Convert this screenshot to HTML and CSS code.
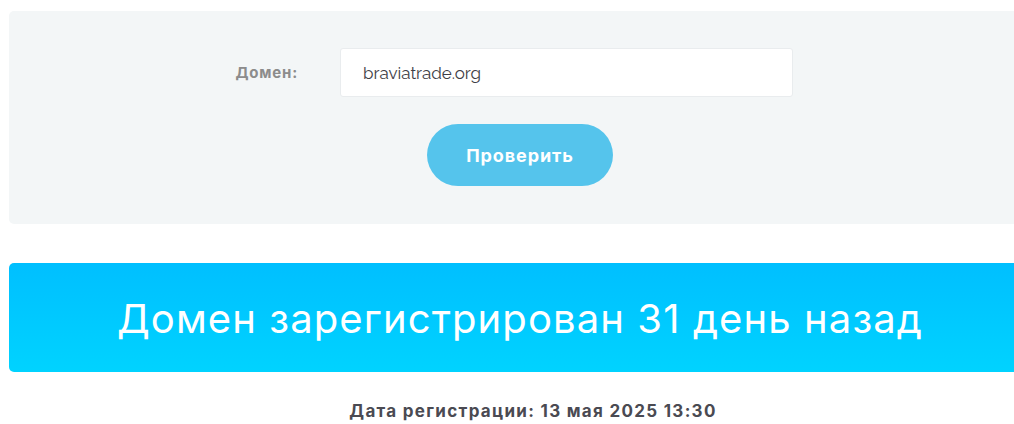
FILE: index.html
```html
<!DOCTYPE html>
<html lang="ru">
<head>
<meta charset="utf-8">
<title>Проверка домена</title>
<link rel="stylesheet" href="styles.css">
</head>
<body>
<div class="page">
  <form class="check-card">
    <div class="form-row">
      <label class="field-label" for="domain">Домен:</label>
      <input class="field-input" id="domain" type="text" value="braviatrade.org">
    </div>
    <div class="actions">
      <button class="check-btn" type="button">Проверить</button>
    </div>
  </form>
  <div class="result-banner">
    <h1 class="result-title">Домен зарегистрирован 31 день назад</h1>
  </div>
  <p class="reg-date">Дата регистрации: 13 мая 2025 13:30</p>
</div>
</body>
</html>
```

FILE: styles.css
```css
html, body {
  margin: 0;
  padding: 0;
  overflow: hidden;
  background: #ffffff;
}
body {
  font-family: Inter, "Noto Sans", "DejaVu Sans", sans-serif;
}
.page {
  width: 1022px;
  padding: 11px 0 0 9px;
}
.check-card {
  margin: 0;
  background: #f3f6f7;
  border-radius: 5px;
  padding: 37px 0 38px;
  display: flex;
  flex-direction: column;
  gap: 27px;
}
.form-row {
  display: grid;
  grid-template-columns: 289px 453px;
  column-gap: 42px;
  align-items: center;
}
.field-label {
  text-align: right;
  font-weight: 700;
  font-size: 15px;
  color: #8c8c8c;
  letter-spacing: 0.8px;
}
.field-input {
  box-sizing: border-box;
  height: 49px;
  width: 453px;
  border: 1px solid #e9ecee;
  border-radius: 3px;
  background: #ffffff;
  padding: 0 22px;
  font-family: Raleway, "Open Sans", "Liberation Sans", sans-serif;
  font-size: 17px;
  color: #3e3e46;
  outline: none;
}
.actions {
  display: flex;
  justify-content: center;
}
.check-btn {
  width: 186px;
  height: 62px;
  border: none;
  border-radius: 31px;
  background: #55c4ec;
  color: #ffffff;
  font-family: Inter, "Noto Sans", sans-serif;
  font-weight: 700;
  font-size: 18px;
  letter-spacing: 0.9px;
  cursor: pointer;
}
.result-banner {
  margin-top: 39px;
  height: 109px;
  border-radius: 5px;
  background: linear-gradient(180deg, #00bfff 0%, #00d3ff 100%);
  display: flex;
  align-items: center;
  justify-content: center;
}
.result-title {
  margin: 0;
  font-weight: 400;
  font-size: 40px;
  color: #ffffff;
  letter-spacing: 1.1px;
  padding-top: 2px;
}
.reg-date {
  margin: 29px 0 0;
  text-align: center;
  padding-left: 26px;
  font-weight: 700;
  font-size: 17px;
  letter-spacing: 1.3px;
  color: #4a4a52;
}
```
